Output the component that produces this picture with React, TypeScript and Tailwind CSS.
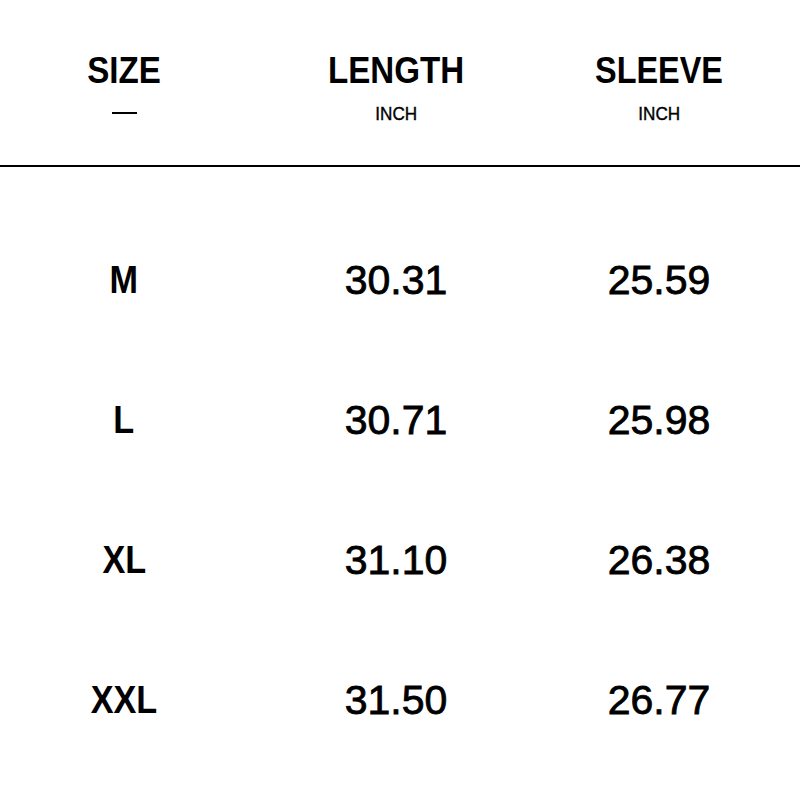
const rows = [
  ["M", "30.31", "25.59"],
  ["L", "30.71", "25.98"],
  ["XL", "31.10", "26.38"],
  ["XXL", "31.50", "26.77"],
];

const cols = "grid grid-cols-[248px_296px_230px]";
const heavy = "[-webkit-text-stroke:0.8px_black]";

export default function App() {
  return (
    <div className="h-[800px] w-[800px] bg-white text-black" style={{ fontFamily: '"Liberation Sans", Arial, sans-serif' }}>
      <div className={`${cols} h-[165px] pt-[48px]`}>
        <div className="flex flex-col items-center">
          <span className="inline-block scale-x-[0.92] text-[36px] leading-[46px] font-bold">SIZE</span>
          <span className="mt-[18px] block h-[2px] w-[25px] bg-black" />
        </div>
        <div className="flex flex-col items-center">
          <span className="inline-block scale-x-[0.92] text-[36px] leading-[46px] font-bold">LENGTH</span>
          <span className="mt-[8px] inline-block scale-x-[0.9] text-[19px] leading-[24px] [-webkit-text-stroke:0.4px_black]">INCH</span>
        </div>
        <div className="flex flex-col items-center">
          <span className="inline-block scale-x-[0.9] text-[36px] leading-[46px] font-bold">SLEEVE</span>
          <span className="mt-[8px] inline-block scale-x-[0.9] text-[19px] leading-[24px] [-webkit-text-stroke:0.4px_black]">INCH</span>
        </div>
      </div>
      <div className="h-[2px] w-full bg-black" />
      <div className="flex flex-col pt-[43px]">
        {rows.map((r) => (
          <div key={r[0]} className={`${cols} h-[140px] items-center`}>
            <div className="text-center">
              <span className="inline-block scale-x-[0.9] text-[38px] font-bold leading-none">{r[0]}</span>
            </div>
            <div className={`text-center text-[41px] leading-none ${heavy}`}>{r[1]}</div>
            <div className={`text-center text-[41px] leading-none ${heavy}`}>{r[2]}</div>
          </div>
        ))}
      </div>
    </div>
  );
}
